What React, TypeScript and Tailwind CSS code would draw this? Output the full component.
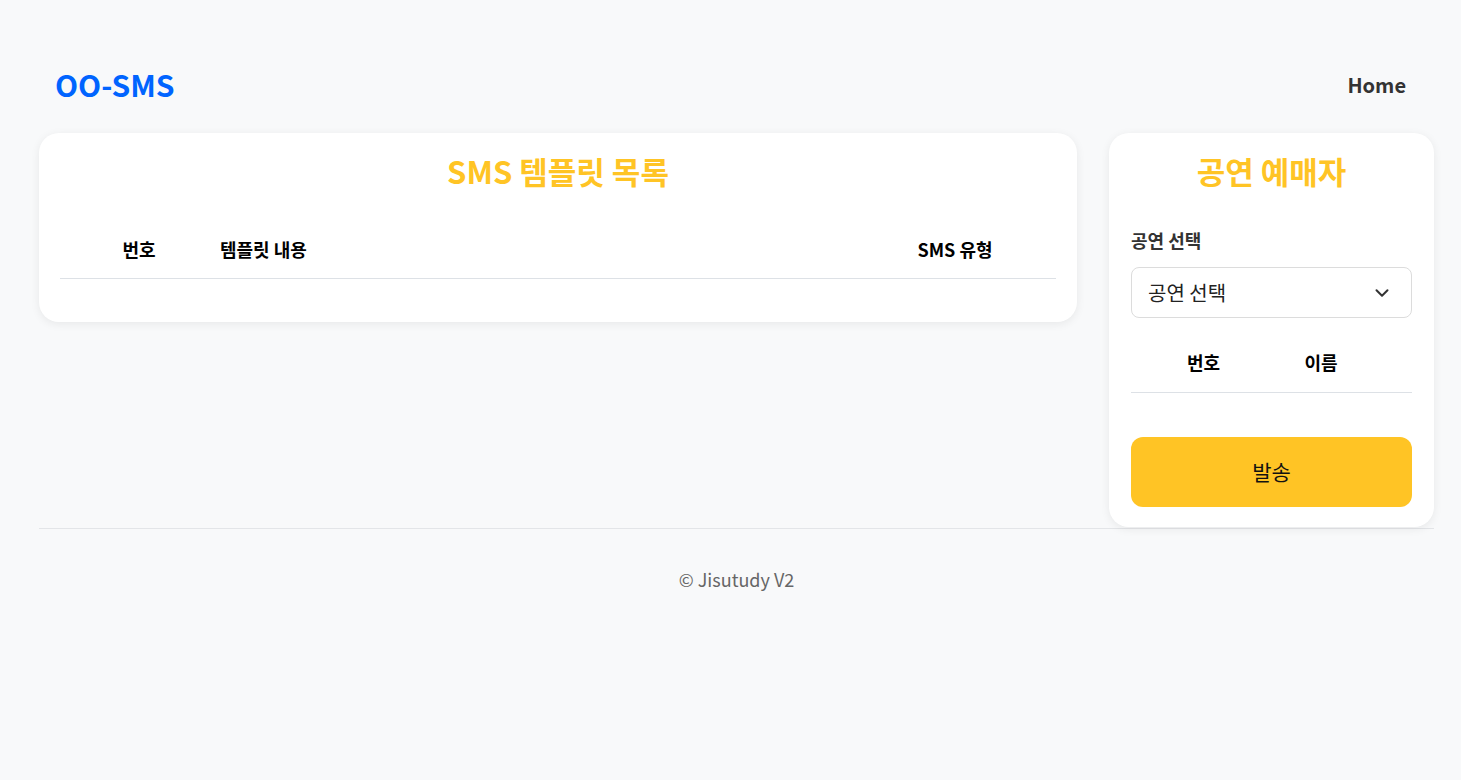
import { ChevronDown } from 'lucide-react';

const font = { fontFamily: '"Noto Sans CJK KR", "Noto Sans", sans-serif' };

function TemplateList() {
  return (
    <section className="flex-1 bg-white rounded-[20px] shadow-[0_2px_10px_rgba(0,0,0,0.07)] px-[21px] pt-[17px] pb-[43px]">
      <h2 className="text-center text-[31px] leading-[42px] font-bold text-[#ffc425]">SMS 템플릿 목록</h2>
      <table className="w-full mt-[29px] border-collapse">
        <thead>
          <tr className="border-b border-[#dde1e6] h-[57px] text-[18px] font-bold text-black">
            <th className="w-[156px] text-center pl-[2px]">번호</th>
            <th className="text-left pl-[4px]">템플릿 내용</th>
            <th className="w-[202px] text-center">SMS 유형</th>
          </tr>
        </thead>
        <tbody></tbody>
      </table>
    </section>
  );
}

function Reservers() {
  return (
    <aside className="w-[325px] bg-white rounded-[20px] shadow-[0_2px_10px_rgba(0,0,0,0.07)] px-[22px] pt-[17px] pb-[20px]">
      <h2 className="text-center text-[31px] leading-[42px] font-bold text-[#ffc425]">공연 예매자</h2>
      <label className="block mt-[36px] text-[18px] leading-[24px] font-bold text-[#333]">공연 선택</label>
      <div className="mt-[15px] h-[51px] rounded-[8px] border border-[#dcdcdc] flex items-center justify-between pl-[16px] pr-[18px]">
        <span className="text-[20px] text-[#222]">공연 선택</span>
        <ChevronDown size={22} strokeWidth={2.2} className="text-[#333]" />
      </div>
      <table className="w-full mt-[16px] border-collapse">
        <thead>
          <tr className="border-b border-[#dde1e6] h-[58px] text-[18px] font-bold text-black">
            <th className="w-[145px] text-center">번호</th>
            <th className="w-[90px] text-center">이름</th>
            <th></th>
          </tr>
        </thead>
      </table>
      <button className="mt-[44px] w-full h-[70px] rounded-[12px] bg-[#ffc425] text-[21px] text-[#111]">발송</button>
    </aside>
  );
}

export default function App() {
  return (
    <div className="min-h-screen bg-[#f8f9fa] pt-[56px]" style={font}>
      <div className="pl-[39px] pr-[27px]">
        <header className="h-[60px] flex items-center justify-between pl-[16px] pr-[28px] pb-[3px]">
          <h1 className="text-[30px] font-bold text-[#0064ff]">OO-SMS</h1>
          <nav className="text-[20px] font-semibold text-[#333]">Home</nav>
        </header>
        <main className="mt-[17px] flex items-start gap-[32px]">
          <TemplateList />
          <Reservers />
        </main>
        <footer className="mt-px border-t border-[#e3e5e8] pt-[38px] text-center text-[18px] leading-[24px] text-[#666]">
          © Jisutudy V2
        </footer>
      </div>
    </div>
  );
}
